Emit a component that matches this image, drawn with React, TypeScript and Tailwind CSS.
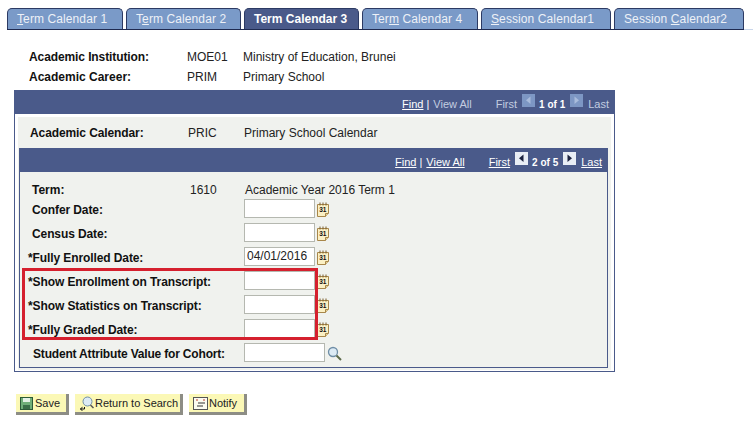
import React from 'react';

const tabs = [
  { before: '', hot: 'T', after: 'erm Calendar 1', width: 'w-[116px]' },
  { before: 'T', hot: 'e', after: 'rm Calendar 2', width: 'w-[115px]' },
  { before: '', hot: '', after: 'Term Calendar 3', width: 'w-[115px]', active: true },
  { before: 'Ter', hot: 'm', after: ' Calendar 4', width: 'w-[116px]' },
  { before: '', hot: 'S', after: 'ession Calendar1', width: 'w-[130px]' },
  { before: 'Session ', hot: 'C', after: 'alendar2', width: 'w-[130px]' },
];

const CalendarIcon = () => (
  <svg width="13" height="15" viewBox="0 0 13 15" className="ml-[2px] mt-[5px] shrink-0 self-start">
    <path d="M.5 2.5H11.5V11L8.5 14.5H.5Z" fill="#fbf0c4" stroke="#a8874a" />
    <path d="M8.5 14.5V11.5H11.5" fill="#e2cf95" stroke="#a8874a" />
    <path d="M3 .5V3.5M6 .5V3.5M9 .5V3.5" stroke="#7a5f2c" />
    <text x="2.2" y="10" fontSize="6.5" fontWeight="bold" fill="#111" fontFamily="Liberation Sans, sans-serif">31</text>
  </svg>
);

const DateInput = ({ value = '', wide = false }: { value?: string; wide?: boolean }) => (
  <div
    className={`mt-[2px] h-[19px] self-start ${wide ? 'w-[81px]' : 'w-[71px]'} border border-[#b5b8b0] bg-white pl-[2px] text-xs leading-[17px] text-[#222]`}
  >
    {value}
  </div>
);

const Row = ({ label, indent, value }: { label: string; indent: string; value?: string }) => (
  <div className="flex h-6 items-center">
    <div className={`mt-[2px] w-[216px] font-bold tracking-[-0.1px] text-[#111] ${indent}`}>{label}</div>
    <DateInput value={value} />
    <CalendarIcon />
  </div>
);

const NavArrow = ({ dir, muted }: { dir: 'left' | 'right'; muted?: boolean }) => (
  <svg width="13" height="13" viewBox="0 0 13 13" className="mb-[8px]">
    <rect width="13" height="13" fill={muted ? '#7d97c4' : '#e8edf5'} />
    <path d={dir === 'left' ? 'M8.5 2.5V10L4 6.25Z' : 'M4.5 2.5V10L9 6.25Z'} fill={muted ? '#a9bcdc' : '#1c2340'} />
  </svg>
);

const Button = ({ children, label, width }: { children: React.ReactNode; label: string; width: string }) => (
  <div className={`flex h-[21px] ${width} items-center whitespace-nowrap border-r-[3px] border-b-[3px] border-r-[#8d8d85] border-b-[#8d8d85] bg-[#fbf8b6] pl-[4px] text-[11px] text-[#222]`}>
    {children}
    <span className="ml-[1px]">{label}</span>
  </div>
);

export default function App() {
  return (
    <div className="h-[421px] w-[753px] overflow-hidden bg-white pt-2 text-xs text-[#222] font-['Liberation_Sans',Arial,sans-serif]">
      {/* Tab strip */}
      <div className="flex h-[22px] items-end pl-[7px]">
        <div className="flex h-[22px] gap-[3px] border-b border-b-[#1f2a50]">
          {tabs.map((t) => (
            <div
              key={t.after}
              className={`flex h-[21px] ${t.width} items-center rounded-t-[5px] border border-b-0 border-[#2c3a63] pl-[9px] text-xs ${
                t.active ? 'bg-[#4a5a8a] font-bold text-white' : 'bg-[#7a9ac8] tracking-[0.1px] text-[#edf1f7]'
              }`}
            >
              <span className="whitespace-pre">
                {t.before}
                {t.hot && <span className="underline">{t.hot}</span>}
                {t.after}
              </span>
            </div>
          ))}
        </div>
        <div className="h-px flex-1 bg-[#c9d6ea]" />
      </div>

      {/* Key fields */}
      <div className="ml-[29px] mt-[17px] text-xs">
        <div className="flex h-5 items-center">
          <span className="w-[158px] font-bold tracking-[-0.1px] text-[#111]">Academic Institution:</span>
          <span className="w-[56px]">MOE01</span>
          <span>Ministry of Education, Brunei</span>
        </div>
        <div className="flex h-5 items-center">
          <span className="w-[158px] font-bold text-[#111]">Academic Career:</span>
          <span className="w-[56px]">PRIM</span>
          <span>Primary School</span>
        </div>
      </div>

      {/* Outer scroll area */}
      <div className="ml-[14px] mt-[3px] w-[601px] border-x border-b border-[#4a5a8a] pb-[1px]">
        <div className="-mx-px flex h-[24px] items-center justify-end bg-[#4a5a8a] pr-[6px] pt-[5px] text-[11px] text-[#c3cde0]">
          <span className="text-white underline">Find</span>
          <span className="ml-[3px] mr-[4px] text-white">|</span>
          <span>View All</span>
          <span className="ml-[24px]">First</span>
          <span className="ml-[5px] mr-[4px] flex"><NavArrow dir="left" muted /></span>
          <span className="text-[10px] font-bold text-white">1 of 1</span>
          <span className="mx-[5px] flex"><NavArrow dir="right" muted /></span>
          <span>Last</span>
        </div>

        <div className="mx-[3px] mt-[3px] bg-[#f0f2ee] pb-[2px]">
          <div className="flex h-[31px] items-center pl-[12px]">
            <span className="w-[158px] font-bold tracking-[-0.1px] text-[#111]">Academic Calendar:</span>
            <span className="w-[56px]">PRIC</span>
            <span>Primary School Calendar</span>
          </div>

          {/* Inner scroll area */}
          <div className="ml-px mr-[3px] border-x border-b border-[#4a5a8a]">
            <div className="-mx-px flex h-[24px] items-center justify-end bg-[#4a5a8a] pr-[6px] pt-[5px] text-[11px] text-white">
              <span className="underline">Find</span>
              <span className="ml-[3px] mr-[4px]">|</span>
              <span className="underline">View All</span>
              <span className="ml-[24px] underline">First</span>
              <span className="ml-[5px] mr-[4px] flex"><NavArrow dir="left" /></span>
              <span className="text-[10px] font-bold">2 of 5</span>
              <span className="mx-[5px] flex"><NavArrow dir="right" /></span>
              <span className="underline">Last</span>
            </div>

            <div className="relative pb-[2px] pl-[8px] pt-[9px]">
              <div className="flex h-[16px] items-center pt-[2px]">
                <span className="w-[162px] pl-[4px] font-bold text-[#111]">Term:</span>
                <span className="w-[55px]">1610</span>
                <span>Academic Year 2016 Term 1</span>
              </div>
              <Row label="Confer Date:" indent="pl-[4px]" />
              <Row label="Census Date:" indent="pl-[4px]" />
              <Row label="*Fully Enrolled Date:" indent="" value="04/01/2016" />
              <Row label="*Show Enrollment on Transcript:" indent="" />
              <Row label="*Show Statistics on Transcript:" indent="" />
              <Row label="*Fully Graded Date:" indent="" />
              <div className="flex h-6 items-center">
                <div className="mt-[2px] w-[216px] pl-[5px] font-bold tracking-[-0.18px] text-[#111]">Student Attribute Value for Cohort:</div>
                <DateInput wide />
                <svg width="15" height="15" viewBox="0 0 15 15" className="ml-[2px] mt-[5px] self-start">
                  <circle cx="6" cy="6" r="4.5" fill="#dcebf5" stroke="#6f8ea6" strokeWidth="1.3" />
                  <path d="M9.5 9.5L14 14" stroke="#5c6a4a" strokeWidth="2" />
                </svg>
              </div>
              {/* Red callout box drawn over the form */}
              <div className="absolute left-[2px] top-[96px] h-[72px] w-[296px] border-[3px] border-[#d5202e]" />
            </div>
          </div>
        </div>
      </div>

      {/* Action buttons */}
      <div className="ml-[16px] mt-[22px] flex gap-[6px]">
        <Button label="Save" width="w-[53px]">
          <svg width="14" height="13" viewBox="0 0 14 13">
            <rect x=".5" y=".5" width="12" height="12" fill="#6fae78" stroke="#2c5a38" />
            <rect x="3" y="1" width="7" height="4" fill="#e4f1e5" />
            <rect x="3" y="8" width="7" height="4" fill="#3a6e48" />
          </svg>
        </Button>
        <Button label="Return to Search" width="w-[108px]">
          <svg width="15" height="15" viewBox="0 0 15 15">
            <circle cx="8.5" cy="5.5" r="4.5" fill="#dcebf5" stroke="#6f8ea6" />
            <path d="M11.5 9L14.5 12" stroke="#555" strokeWidth="1.5" />
            <path d="M5.5 11V13H2M3.5 11.3L1.2 13L3.5 14.7" fill="none" stroke="#111" />
          </svg>
        </Button>
        <Button label="Notify" width="w-[58px]">
          <svg width="15" height="13" viewBox="0 0 15 13">
            <rect x=".5" y=".5" width="14" height="12" fill="#fbfbf0" stroke="#555" />
            <path d="M3 3H5M10 3H12" stroke="#c0392b" />
            <path d="M5 6H12M4 9H10" stroke="#333" />
          </svg>
        </Button>
      </div>
    </div>
  );
}
